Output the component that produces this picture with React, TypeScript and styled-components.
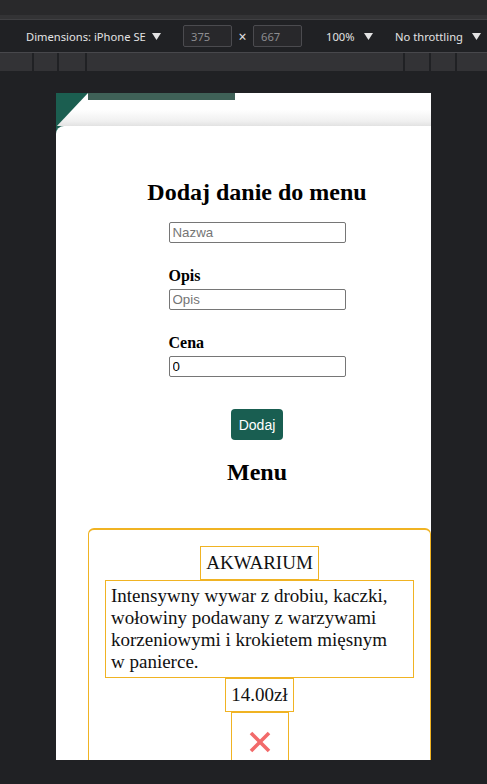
import React from "react";
import styled, { createGlobalStyle } from "styled-components";

const Global = createGlobalStyle`
  html, body { margin: 0; padding: 0; background: #202124; }
  body { width: 487px; height: 784px; overflow: hidden; }
  * { box-sizing: border-box; }
`;

const Screen = styled.div`
  width: 487px;
  height: 784px;
  background: #202124;
  display: flex;
  flex-direction: column;
  overflow: hidden;
`;

const TopStrip = styled.div`
  height: 15px;
  background: #29292b;
`;

const SubStrip = styled.div`
  height: 5px;
  background: #333335;
  border-bottom: 1px solid #404043;
`;

const Toolbar = styled.div`
  height: 33px;
  display: flex;
  align-items: center;
  background: #202124;
  border-bottom: 1px solid #48484c;
  font-family: "Noto Sans", "Open Sans", sans-serif;
  font-size: 11.2px;
  color: #e3e3e3;
  padding-left: 26px;
`;

const ToolItem = styled.div<{ $ml?: number; $w?: number }>`
  display: flex;
  align-items: center;
  justify-content: space-between;
  margin-left: ${(p) => p.$ml ?? 0}px;
  ${(p) => (p.$w ? `width: ${p.$w}px;` : ``)}
  white-space: nowrap;
`;

const SizeBox = styled.div`
  width: 49px;
  height: 22px;
  background: #28282b;
  border: 1px solid #4b4b4f;
  border-radius: 2px;
  color: #8d8d90;
  padding-left: 7px;
  display: flex;
  align-items: center;
`;

const Times = styled.span`
  width: 21px;
  text-align: center;
  font-size: 14px;
`;

const Ruler = styled.div`
  height: 18px;
  display: flex;
  gap: 2px;
  background: #202124;
`;

const RulerSeg = styled.div<{ $w?: number }>`
  background: #333336;
  ${(p) => (p.$w ? `width: ${p.$w}px; flex: none;` : `flex: 1;`)}
`;

const Device = styled.div`
  margin: 22px 0 0 56px;
  width: 375px;
  height: 667px;
  background: #fff;
  overflow: hidden;
  display: flex;
  flex-direction: column;
  flex: none;
`;

const Header = styled.header`
  height: 33px;
  flex: none;
  display: flex;
  align-items: flex-start;
  background: linear-gradient(to bottom, #ffffff 0%, #ffffff 50%, #f0f0f0 85%, #e2e2e2 100%);
`;

const Corner = styled.div`
  width: 32px;
  height: 34px;
  background: #1b5e50;
  clip-path: polygon(0 0, 100% 0, 0 100%);
`;

const TopBar = styled.div`
  width: 147px;
  height: 7px;
  background: #3f6157;
`;

const Shell = styled.div`
  flex: 1;
  background: #1b5e50;
  display: flex;
  flex-direction: column;
`;

const Main = styled.main`
  flex: 1;
  background: #fff;
  border-top-left-radius: 8px;
  padding: 52px 0 0 32px;
  display: flex;
  flex-direction: column;
`;

const Section = styled.section`
  display: flex;
  flex-direction: column;
  align-items: center;
  padding-right: 5px;
`;

const Title = styled.h2<{ $mt?: number }>`
  margin: ${(p) => p.$mt ?? 0}px 0 0 0;
  font-family: "Liberation Serif", "Times New Roman", serif;
  font-weight: bold;
  font-size: 24px;
  line-height: 28px;
  color: #000;
`;

const Input = styled.input`
  width: 177px;
  height: 21px;
  margin: 0;
  border: 1px solid #767676;
  border-radius: 2px;
  padding: 1px 3px;
  font-family: "Liberation Sans", Arial, sans-serif;
  font-size: 13.3px;
  color: #000;
  background: #fff;
  &::placeholder { color: #757575; }
`;

const Field = styled.div<{ $mt: number }>`
  display: flex;
  flex-direction: column;
  align-items: flex-start;
  width: 177px;
  margin-top: ${(p) => p.$mt}px;
`;

const Label = styled.label`
  display: block;
  font-family: "Liberation Serif", "Times New Roman", serif;
  font-weight: bold;
  font-size: 16px;
  line-height: 18px;
  margin-bottom: 4px;
  color: #000;
`;

const AddButton = styled.button`
  margin-top: 32px;
  height: 31px;
  padding: 0 8px;
  border: none;
  border-radius: 4px;
  background: #195e51;
  color: #fff;
  font-family: "Liberation Sans", Arial, sans-serif;
  font-size: 14px;
  cursor: pointer;
`;

const Card = styled.div`
  margin: 42px 0 0 0;
  border: 1px solid #f0b323;
  border-top-width: 2px;
  border-radius: 6px 6px 0 0;
  padding: 16px 16px 0 16px;
  display: flex;
  flex-direction: column;
  align-items: center;
  font-family: "Liberation Serif", "Times New Roman", serif;
  font-size: 19px;
  line-height: 22px;
  color: #111;
`;

const Cell = styled.div<{ $full?: boolean }>`
  border: 1px solid #f0b323;
  padding: 5px;
  ${(p) => (p.$full ? `align-self: stretch; padding: 4px 18px 4px 5px; text-align: left;` : ``)}
`;

const DeleteCell = styled.button`
  border: 1px solid #f0b323;
  background: #fff;
  padding: 18px 17px 20px;
  display: flex;
  align-items: center;
  justify-content: center;
  cursor: pointer;
`;

const Caret = () => (
  <svg width="9" height="7" viewBox="0 0 9 7">
    <path d="M0 0 H9 L4.5 7 Z" fill="#e3e3e3" />
  </svg>
);

export default function App() {
  return (
    <>
      <Global />
      <Screen>
        <TopStrip />
        <SubStrip />
        <Toolbar>
          <ToolItem $w={135}>
            Dimensions: iPhone SE <Caret />
          </ToolItem>
          <ToolItem $ml={22}>
            <SizeBox>375</SizeBox>
            <Times>×</Times>
            <SizeBox>667</SizeBox>
          </ToolItem>
          <ToolItem $ml={24} $w={47}>
            100% <Caret />
          </ToolItem>
          <ToolItem $ml={22} $w={86}>
            No throttling <Caret />
          </ToolItem>
        </Toolbar>
        <Ruler>
          <RulerSeg $w={32} />
          <RulerSeg $w={23} />
          <RulerSeg $w={26} />
          <RulerSeg />
          <RulerSeg $w={24} />
          <RulerSeg $w={24} />
          <RulerSeg $w={30} />
        </Ruler>
        <Device>
          <Header>
            <Corner />
            <TopBar />
          </Header>
          <Shell>
            <Main>
              <Section>
                <Title>Dodaj danie do menu</Title>
                <Field $mt={16}>
                  <Input placeholder="Nazwa" />
                </Field>
                <Field $mt={24}>
                  <Label>Opis</Label>
                  <Input placeholder="Opis" />
                </Field>
                <Field $mt={24}>
                  <Label>Cena</Label>
                  <Input defaultValue="0" />
                </Field>
                <AddButton>Dodaj</AddButton>
                <Title $mt={18}>Menu</Title>
              </Section>
              <Card>
                <Cell>AKWARIUM</Cell>
                <Cell $full>
                  Intensywny wywar z drobiu, kaczki, wołowiny podawany z warzywami korzeniowymi i krokietem mięsnym w panierce.
                </Cell>
                <Cell>14.00zł</Cell>
                <DeleteCell aria-label="Usuń">
                  <svg width="22" height="22" viewBox="0 0 22 22">
                    <path d="M2 2 L20 20 M20 2 L2 20" stroke="#f26a6a" strokeWidth="3.6" />
                  </svg>
                </DeleteCell>
              </Card>
            </Main>
          </Shell>
        </Device>
      </Screen>
    </>
  );
}
